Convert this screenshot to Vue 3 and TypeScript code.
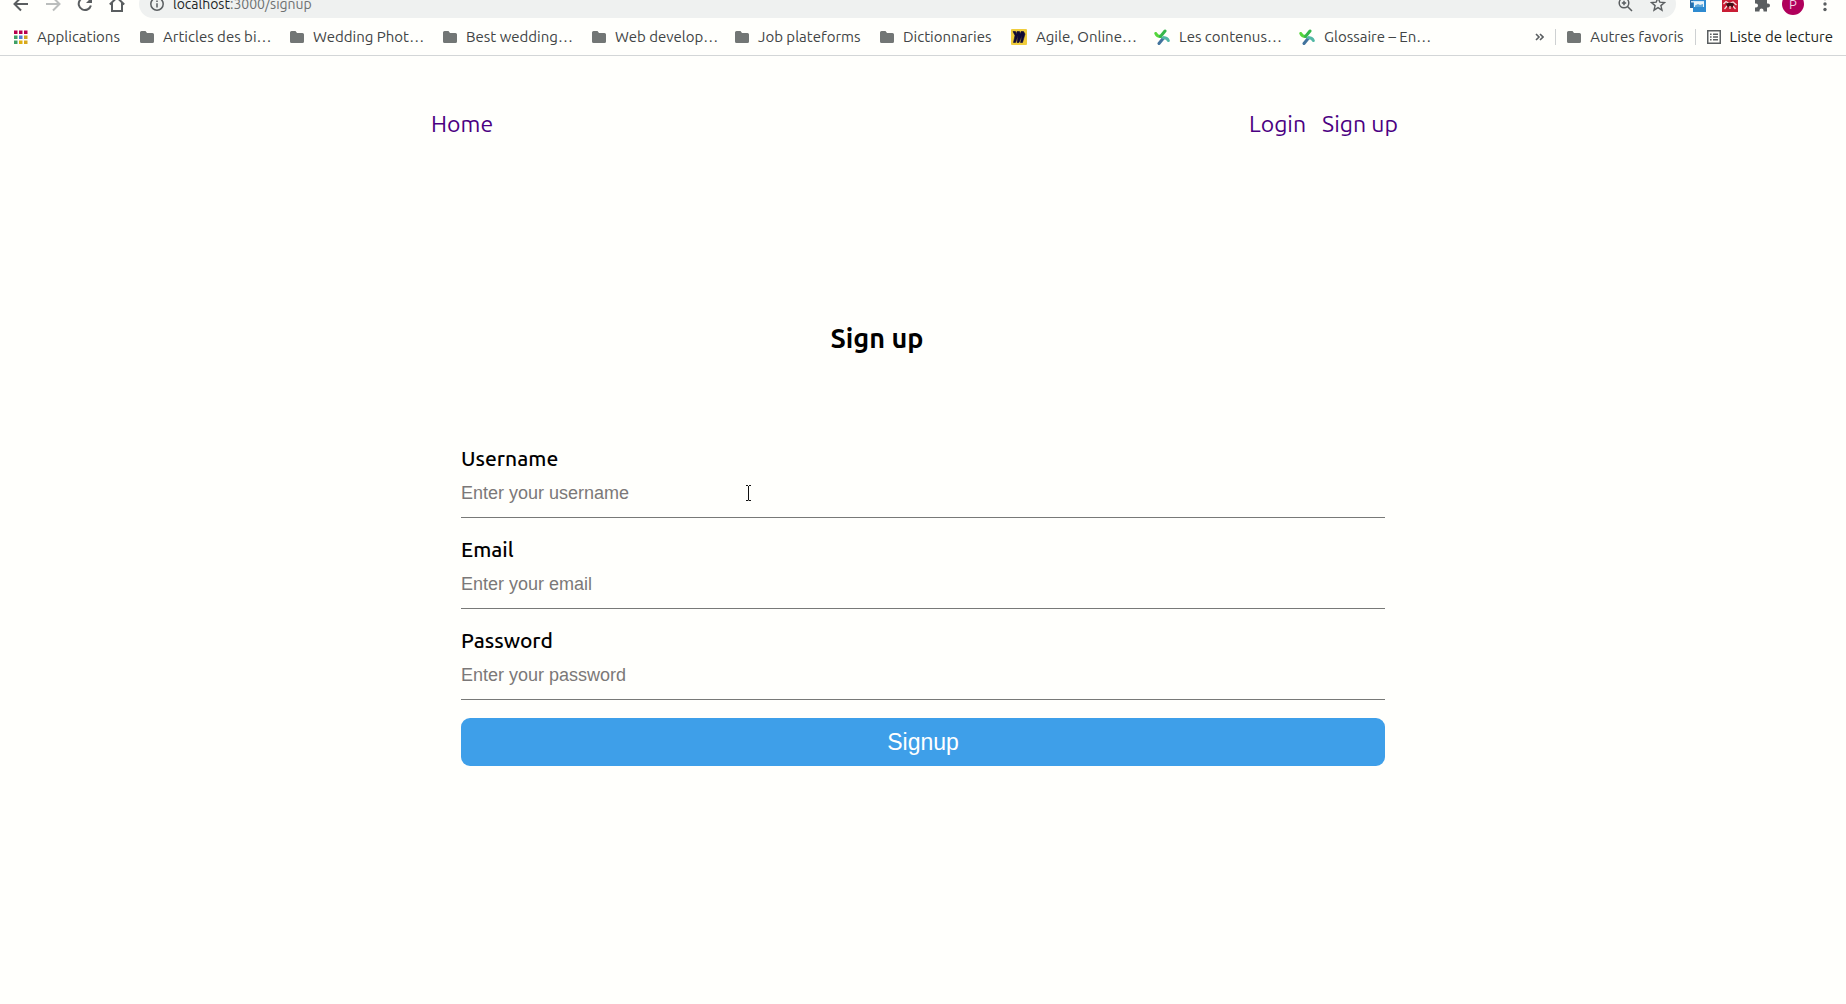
<script setup lang="ts">
import { ref } from 'vue'

type IconKind = 'apps' | 'folder' | 'miro' | 'cross'

interface Bookmark {
  label: string
  icon: IconKind
  width: number
}

const bookmarks: Bookmark[] = [
  { label: 'Applications', icon: 'apps', width: 126 },
  { label: 'Articles des bi…', icon: 'folder', width: 150 },
  { label: 'Wedding Phot…', icon: 'folder', width: 153 },
  { label: 'Best wedding…', icon: 'folder', width: 149 },
  { label: 'Web develop…', icon: 'folder', width: 143 },
  { label: 'Job plateforms', icon: 'folder', width: 145 },
  { label: 'Dictionnaries', icon: 'folder', width: 131 },
  { label: 'Agile, Online…', icon: 'miro', width: 143 },
  { label: 'Les contenus…', icon: 'cross', width: 145 },
  { label: 'Glossaire – En…', icon: 'cross', width: 145 },
]

const appColors = ['#b8004e', '#b8004e', '#b8004e', '#3fa066', '#4f7fd6', '#d0a022', '#3fa066', '#e0b010', '#d8a81c']

const username = ref('')
const email = ref('')
const password = ref('')
</script>

<template>
  <div class="browser">
    <header class="toolbar">
      <div class="nav-buttons">
        <button type="button" aria-label="Back">
          <svg width="16" height="16" viewBox="0 0 16 16" fill="none" stroke="#5a5e60" stroke-width="2"><path d="M15 8H2M8 1.5L1.5 8L8 14.5" /></svg>
        </button>
        <button type="button" aria-label="Forward">
          <svg width="16" height="16" viewBox="0 0 16 16" fill="none" stroke="#bbbebd" stroke-width="2"><path d="M1 8h13M8 1.5L14.500 8L8 14.500" /></svg>
        </button>
        <button type="button" aria-label="Reload">
          <svg width="16" height="16" viewBox="0 0 16 16" fill="none" stroke="#5a5e60" stroke-width="2"><path d="M13.900 9.500A6.200 6.200 0 1 1 12.500 3.700" /><path d="M15 1v6H9z" fill="#5a5e60" stroke="none" /></svg>
        </button>
        <button type="button" aria-label="Home page">
          <svg width="16" height="16" viewBox="0 0 16 16" fill="none" stroke="#5a5e60" stroke-width="2"><path d="M0.800 8.500L8 1.500L15.200 8.500M3 7v8h10V7" /></svg>
        </button>
      </div>
      <div class="omnibox">
        <svg width="14" height="14" viewBox="0 0 14 14" fill="none" stroke="#5a5e60" stroke-width="1.500"><circle cx="7" cy="7" r="6.200" /><path d="M7 6.200v4.300M7 3.400v1.600" /></svg>
        <span class="url"><b>localhost</b>:3000/signup</span>
        <svg width="15" height="15" viewBox="0 0 15 15" fill="none" stroke="#5a5e60" stroke-width="1.500"><circle cx="6" cy="6" r="4.800" /><path d="M9.500 9.500L14 14M3.800 6h4.400M6 3.800v4.400" /></svg>
        <svg width="16" height="16" viewBox="0 0 16 16" fill="none" stroke="#5a5e60" stroke-width="1.400"><path d="M8 1.800L9.800 6.100L14.500 6.500L10.900 9.600L12 14.200L8 11.700L4 14.200L5.100 9.600L1.500 6.500L6.200 6.100Z" /></svg>
      </div>
      <div class="extensions">
        <svg width="16" height="16" viewBox="0 0 16 16"><rect x="0" y="0" width="15" height="12" fill="#2a6ca8" /><rect x="3" y="4" width="13" height="12" fill="#2f8bd0" /><path d="M1 5h13v1.500H1z" fill="#cfe4f4" /><path d="M4 6h10v5H4z" fill="#e8f3fa" /><path d="M5 11V9.500l3-1.500 2 1 3-1v3z" fill="#5fa7da" /></svg>
        <svg width="16" height="16" viewBox="0 0 16 16"><rect width="16" height="16" fill="#c91d34" /><path d="M1.500 8L4 5.500L7 7.500L11 6L14.500 9M2.500 13L5 10M8 13V10M13.500 13L11 10" stroke="#f3dcdc" stroke-width="1.300" fill="none" /><path d="M4 8Q8 5.500 12 8L10.500 11.500L8 9.500L6 11.500Z" fill="#3a1216" /></svg>
        <svg width="16" height="16" viewBox="0 0 16 16" fill="#5a5e60"><path d="M1 3.500h4V2.500a2 2 0 0 1 4 0v1h4v4h1a2 2 0 0 1 0 4h-1v4H9.500v-1a2 2 0 0 0-4 0v1H1v-4h1a1.900 1.900 0 0 0 0-4H1z" /></svg>
        <span class="avatar">P</span>
        <svg width="4" height="16" viewBox="0 0 4 16" fill="#5a5e60"><circle cx="2" cy="2.500" r="1.700" /><circle cx="2" cy="8" r="1.700" /><circle cx="2" cy="13.500" r="1.700" /></svg>
      </div>
    </header>

    <nav class="bookmarks" aria-label="Bookmarks">
      <a v-for="item in bookmarks" :key="item.label" href="#" class="bookmark" :style="{ width: item.width + 'px' }">
        <svg v-if="item.icon === 'apps'" class="small" viewBox="0 0 14 14">
          <rect v-for="(color, i) in appColors" :key="i" :x="(i % 3) * 5" :y="Math.floor(i / 3) * 5 + 0.5" width="3.500" height="3.500" :fill="color" />
        </svg>
        <svg v-else-if="item.icon === 'folder'" class="small" viewBox="0 0 14 14"><path d="M1.500 1H5.500L7 3H12.500A1.500 1.500 0 0 1 14 4.500V11.500A1.500 1.500 0 0 1 12.500 13H1.500A1.500 1.500 0 0 1 0 11.500V2.500A1.500 1.500 0 0 1 1.500 1Z" fill="#727675" /></svg>
        <svg v-else-if="item.icon === 'miro'" class="large" viewBox="0 0 16 16"><rect width="16" height="16" rx="1" fill="#f0cd3c" /><path d="M2 2.500H4.500L5.500 5L6 2.500H8.500L9.500 5L10 2.500H12.500L14 5L11.500 13.500H9.500L11 6.500L8 13.500H6L7.200 6.500L4.500 13.500H2.500L4 6.500Z" fill="#100a35" stroke="#100a35" stroke-width="0.600" /></svg>
        <svg v-else class="large" viewBox="0 0 16 16" fill="none" stroke-width="3" stroke-linecap="round"><path d="M1.800 4.500Q3 7.500 6.500 7.500" stroke="#55d63c" /><path d="M6.500 7.500L11 2" stroke="#35b84b" /><path d="M5 14.500L9.500 9" stroke="#42739d" /><path d="M9.500 8.800Q13 8.500 14.300 11.500" stroke="#52b8a5" /></svg>
        <span>{{ item.label }}</span>
      </a>
      <div class="bookmarks-end">
        <button type="button" aria-label="More bookmarks">
          <svg width="9" height="8" viewBox="0 0 9 8" fill="none" stroke="#5a5e60" stroke-width="1.600"><path d="M1 1l3 3L1 7M5 1l3 3L5 7" /></svg>
        </button>
        <i class="separator"></i>
        <a href="#" class="bookmark">
          <svg class="small" viewBox="0 0 14 14"><path d="M1.500 1H5.500L7 3H12.500A1.500 1.500 0 0 1 14 4.500V11.500A1.500 1.500 0 0 1 12.500 13H1.500A1.500 1.500 0 0 1 0 11.500V2.500A1.500 1.500 0 0 1 1.500 1Z" fill="#727675" /></svg>
          <span>Autres favoris</span>
        </a>
        <i class="separator"></i>
        <a href="#" class="bookmark reading">
          <svg class="small" viewBox="0 0 14 14" fill="none" stroke="#5a5e60" stroke-width="1.500"><rect x="0.750" y="0.750" width="12.500" height="12.500" /><path d="M3 4.200h1.600M3 7h1.600M3 9.800h1.600M6 4.200h5M6 7h5M6 9.800h5" /></svg>
          <span>Liste de lecture</span>
        </a>
      </div>
    </nav>

    <main class="page">
      <nav class="site-nav" aria-label="Site">
        <a href="/">Home</a>
        <div class="account-links">
          <a href="/login">Login</a>
          <a href="/signup">Sign up</a>
        </div>
      </nav>

      <h1>Sign up</h1>

      <form class="signup" @submit.prevent>
        <div class="field">
          <label for="username">Username</label>
          <input id="username" v-model="username" type="text" placeholder="Enter your username" />
          <svg class="text-cursor" width="7" height="17" viewBox="0 0 7 17" fill="none" stroke="#111" aria-hidden="true"><path d="M1 0.500h2M4 0.500h2M3.500 1v14.500M1 15.500h2M4 15.500h2" /></svg>
        </div>
        <div class="field">
          <label for="email">Email</label>
          <input id="email" v-model="email" type="email" placeholder="Enter your email" />
        </div>
        <div class="field">
          <label for="password">Password</label>
          <input id="password" v-model="password" type="password" placeholder="Enter your password" />
        </div>
        <button type="submit" class="submit">Signup</button>
      </form>
    </main>
  </div>
</template>

<style>
body {
  background: #fffffc;
}
</style>

<style scoped>
.browser {
  min-height: 100vh;
  color: #414445;
  background: #fffffc;
  font-family: Ubuntu, "Noto Sans", sans-serif;
}
.browser *,
.browser {
  box-sizing: border-box;
}
a {
  color: inherit;
  text-decoration: none;
}
button {
  padding: 0;
  border: 0;
  background: none;
}
svg {
  display: block;
  flex: none;
}
.toolbar {
  display: flex;
  align-items: flex-end;
  height: 18px;
  overflow: hidden;
}
.nav-buttons,
.extensions,
.omnibox {
  display: flex;
  flex: none;
  align-items: center;
  height: 28px;
}
.nav-buttons {
  gap: 16px;
  padding: 0 14px 0 13px;
}
.omnibox {
  flex: 1;
  gap: 17px;
  padding: 0 10px 0 11px;
  border-radius: 14px;
  background: #eff1f0;
}
.url {
  flex: 1;
  margin-left: -8px;
  color: #6d7071;
  font-size: 14px;
  line-height: 20px;
}
.url b {
  color: #222526;
  font-weight: 400;
}
.extensions {
  gap: 16px;
  padding: 0 19px 0 14px;
}
.avatar {
  width: 22px;
  height: 22px;
  margin: 0 3px 0 -4px;
  border-radius: 50%;
  background: #b0005b;
  color: #f3d3e3;
  font-size: 13px;
  line-height: 22px;
  text-align: center;
}
.bookmarks {
  display: flex;
  align-items: center;
  height: 38px;
  padding: 0 13px 0 14px;
  border-bottom: 1px solid #d3d6d7;
  font-size: 15px;
  line-height: 20px;
  white-space: nowrap;
}
.bookmark {
  display: flex;
  flex: none;
  align-items: center;
  gap: 9px;
}
.small {
  width: 14px;
  height: 14px;
}
.large {
  width: 16px;
  height: 16px;
}
.bookmarks-end {
  display: flex;
  align-items: center;
  gap: 11px;
  margin-left: auto;
}
.separator {
  width: 1px;
  height: 16px;
  background: #ced1d2;
}
.reading {
  color: #1c1f20;
}
.page {
  width: 53.3%;
  min-width: 640px;
  margin: 0 auto;
}
.site-nav {
  display: flex;
  justify-content: space-between;
  padding: 52px 17px 0 0;
  color: #4b0082;
  font-size: 23px;
  line-height: 32px;
}
.account-links {
  display: flex;
  gap: 16px;
}
h1 {
  margin: 182px 92px 0 0;
  color: #000;
  font-size: 27px;
  font-weight: 700;
  line-height: 32px;
  text-align: center;
}
.signup {
  padding: 90px 30px 0;
}
.field {
  position: relative;
  height: 91px;
  color: #000;
}
.field label {
  display: block;
  font-size: 21px;
  font-weight: 500;
  line-height: 28px;
}
.field input {
  display: block;
  width: 100%;
  height: 46px;
  padding: 0 0 2px;
  border: 0;
  border-bottom: 1px solid #787977;
  outline: 0;
  background: transparent;
  font: 18px/24px "Liberation Sans", Arial, sans-serif;
}
.field input::placeholder {
  color: #7b7878;
  opacity: 1;
}
.text-cursor {
  position: absolute;
  top: 41px;
  left: 284px;
}
.submit {
  display: block;
  width: 100%;
  height: 48px;
  margin-top: 1px;
  border-radius: 9px;
  background: #3e9fe9;
  color: #fff;
  font: 23px/28px "Liberation Sans", Arial, sans-serif;
}
</style>
